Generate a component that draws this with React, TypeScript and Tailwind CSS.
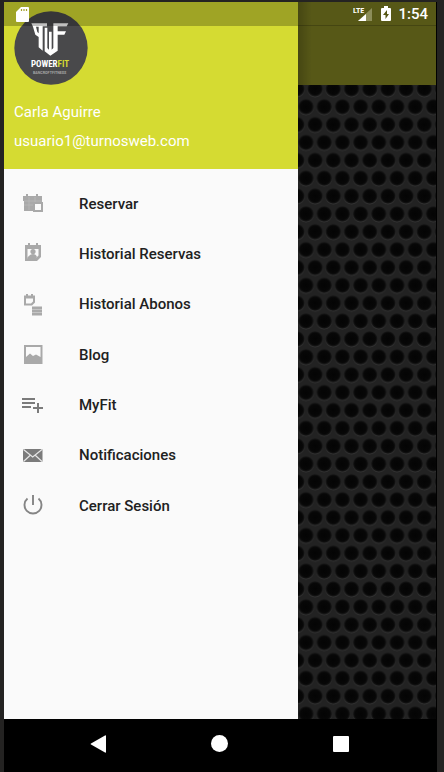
import type { ReactNode } from "react";

function Logo() {
  return (
    <svg viewBox="0 0 222 222" className="size-[74px]" role="img" aria-label="PowerFit">
      <circle cx="111" cy="111" r="110" fill="#49494b" />
      <g fill="#fff">
        <path fillRule="evenodd" d="M52 37H99V46H86V119L74 109V78L64 71L57 47ZM66 47L70 63L74 67V47Z" />
        <path d="M92 50H100V111L105 116V62H113V116L118 111V37H163L158 46H131V61H156L151 71H131V119L109 134L92 121Z" />
      </g>
      <text
        x="108"
        y="167"
        fill="#fff"
        fontFamily="'Roboto Condensed', 'Liberation Sans Narrow', Roboto, sans-serif"
        fontWeight="700"
        fontSize="27"
        textAnchor="middle"
      >
        POWER<tspan fill="#d5db32">FIT</tspan>
      </text>
      <text x="107" y="189" fill="#a5a5a5" fontFamily="Roboto, sans-serif" fontWeight="700" fontSize="11" textAnchor="middle">
        BANCROFTFITNESS
      </text>
    </svg>
  );
}

function ReservarIcon() {
  return (
    <svg viewBox="0 0 22 22" className="size-[22px]" fill="#a9a9a9">
      <path d="M1 3H4V1H6V3H14V1H16V3H20V18H2V8H1Z" />
      <path d="M2 8H20M7 4V17M13 4V10M2 12H12" stroke="#bababa" strokeWidth=".7" />
      <path d="M11 9H21V19H11Z" />
      <path d="M13 11H19V17H13Z" fill="#fafafa" />
    </svg>
  );
}

function HistorialReservasIcon() {
  return (
    <svg viewBox="0 0 22 22" className="size-[22px]" fill="#a9a9a9">
      <path fillRule="evenodd" d="M3 2H6V0H8V2H14V0H16V2H19V14L15 18H3ZM5.500 6V15.500H13.500L16.500 12.500V6Z" />
      <circle cx="11" cy="8.500" r="2.600" />
      <path d="M5.500 16V14.500Q8 11 11 11Q14 11 15 14L13 17Z" />
    </svg>
  );
}

function HistorialAbonosIcon() {
  return (
    <svg viewBox="0 0 22 22" className="size-[22px]" fill="#a9a9a9">
      <path fillRule="evenodd" d="M2 1.500H4V0H6V1.500H9V0H11V1.500H13V8.500L10 11.500H2ZM4 4.500V9.500H9L11 7.500V4.500Z" />
      <path d="M10 12.500H20V21.500H10Z" />
      <path d="M10 15.500H20M10 18.500H20" stroke="#cdcdcd" strokeWidth=".8" />
    </svg>
  );
}

function BlogIcon() {
  return (
    <svg viewBox="0 0 22 22" className="size-[22px]" fill="#a9a9a9">
      <path fillRule="evenodd" d="M2 1H20.500V20H2ZM4 3V13L8 9.500L11 12L14 10.500L18.500 13V3Z" />
    </svg>
  );
}

function MyFitIcon() {
  return (
    <svg viewBox="0 0 22 22" className="size-[22px]" fill="none" stroke="#7b7b7b" strokeWidth="2">
      <path d="M0 5H13M0 9H13M0 13H9M16 9V19M11 14H21" />
    </svg>
  );
}

function MailIcon() {
  return (
    <svg viewBox="0 0 22 22" className="size-[22px]">
      <rect x="1" y="4" width="19.500" height="13" rx="1" fill="#7b7b7b" />
      <path d="M1.500 4.500L10.700 12L20 4.500M1.500 16.500L8 10.500M20 16.500L13.500 10.500" fill="none" stroke="#e6e6e6" strokeWidth="1.200" />
    </svg>
  );
}

function PowerIcon() {
  return (
    <svg viewBox="0 0 22 22" className="size-[22px]" fill="none" stroke="#858585" strokeWidth="1.900">
      <path d="M11 0V10M5.500 3.500A8.500 8.500 0 1 0 16.500 3.500" />
    </svg>
  );
}

const items: { label: string; icon: ReactNode }[] = [
  { label: "Reservar", icon: <ReservarIcon /> },
  { label: "Historial Reservas", icon: <HistorialReservasIcon /> },
  { label: "Historial Abonos", icon: <HistorialAbonosIcon /> },
  { label: "Blog", icon: <BlogIcon /> },
  { label: "MyFit", icon: <MyFitIcon /> },
  { label: "Notificaciones", icon: <MailIcon /> },
  { label: "Cerrar Sesión", icon: <PowerIcon /> },
];

function StatusBar() {
  return (
    <div className="absolute inset-x-0 top-0 flex h-6 text-white">
      <div className="flex w-[68%] items-center bg-black/25 pl-3">
        <svg viewBox="0 0 13 15" className="h-[15px] w-[13px]">
          <path d="M5 0H12Q13 0 13 1V14Q13 15 12 15H1Q0 15 0 14V5Z" fill="#fff" />
          <path d="M5.500 2V4M8 2V4M10.500 2V4" stroke="#a3a02a" strokeWidth="1.200" />
        </svg>
      </div>
      <div className="flex flex-1 items-center justify-end border-b border-black/20 pr-2">
        <svg viewBox="0 0 20 16" className="mr-2 h-4 w-5">
          <path d="M19 2V15H5Z" fill="#8c8d59" />
          <path d="M13 8V15H5Z" fill="#fff" />
          <text x="0" y="7" fill="#fff" fontFamily="'Roboto Condensed', 'Liberation Sans Narrow', Roboto, sans-serif" fontWeight="700" fontSize="8">
            LTE
          </text>
        </svg>
        <svg viewBox="0 0 10 15" className="mr-[7px] h-[15px] w-[10px]">
          <path d="M3 0H7V2H9Q10 2 10 3V14Q10 15 9 15H1Q0 15 0 14V3Q0 2 1 2H3Z" fill="#fff" />
          <path d="M6 4L2 9H4.500V13L8 8H6Z" fill="#565716" />
        </svg>
        <span className="text-[15px] leading-6 font-medium">1:54</span>
      </div>
    </div>
  );
}

function Mesh() {
  return (
    <svg className="w-full flex-1" aria-hidden="true">
      <defs>
        <radialGradient id="hole">
          <stop offset="0" stopColor="#040404" />
          <stop offset=".7" stopColor="#070707" />
          <stop offset=".86" stopColor="#131313" />
          <stop offset="1" stopColor="#232323" stopOpacity="0" />
        </radialGradient>
        <linearGradient id="rim" x1="0" y1="0" x2="0" y2="1">
          <stop offset=".5" stopColor="#363636" stopOpacity="0" />
          <stop offset="1" stopColor="#363636" />
        </linearGradient>
        <pattern id="mesh" width="18.200" height="35.720" patternUnits="userSpaceOnUse" x="8" y="-5">
          <rect width="18.200" height="35.720" fill="#222" />
          <g fill="none" stroke="url(#rim)">
            <circle cx="9.100" cy="9" r="7.800" />
            <circle cx="0" cy="26.860" r="7.800" />
            <circle cx="18.200" cy="26.860" r="7.800" />
          </g>
          <g fill="url(#hole)">
            <circle cx="9.100" cy="8.800" r="8.200" />
            <circle cx="0" cy="26.660" r="8.200" />
            <circle cx="18.200" cy="26.660" r="8.200" />
          </g>
        </pattern>
      </defs>
      <rect width="100%" height="100%" fill="url(#mesh)" />
    </svg>
  );
}

export default function App() {
  return (
    <div className="flex min-h-screen flex-col bg-[#242322] pt-[2px] pr-[7px] pl-1 font-[Roboto,sans-serif]">
      <div className="relative flex flex-1 border-r border-black">
        <aside className="flex w-[68%] flex-col bg-[#fafafa]">
          <header className="flex h-[167px] flex-col bg-[#d5db32] px-[10px] pt-[9px] text-[15px] text-white">
            <Logo />
            <p className="mt-[13px] leading-[29px]">Carla Aguirre</p>
            <p className="leading-[29px]">usuario1@turnosweb.com</p>
          </header>
          <nav className="pt-[10px]">
            <ul className="grid h-[352px] auto-rows-fr">
              {items.map((item) => (
                <li key={item.label} className="flex">
                  <a href="#" className="flex flex-1 items-center gap-[35px] pl-[18px] text-[15px] font-medium text-[#212121]">
                    {item.icon}
                    {item.label}
                  </a>
                </li>
              ))}
            </ul>
          </nav>
        </aside>
        <main className="flex flex-1 flex-col bg-[#1e1e1e]">
          <div className="h-[83px] bg-[#575817] bg-linear-to-r from-black/20 to-transparent to-10%" />
          <Mesh />
        </main>
        <StatusBar />
      </div>
      <footer className="grid h-[53px] grid-cols-3 items-center justify-items-center bg-black pr-9 pb-1 pl-[34px]">
        <button type="button" aria-label="Atrás">
          <svg viewBox="0 0 17 18" className="h-[18px] w-[17px]" fill="#fff">
            <path d="M15 .500Q16 0 16 1V17Q16 18 15 17.500L1 9.500Q0 9 1 8.500Z" />
          </svg>
        </button>
        <button type="button" aria-label="Inicio" className="size-[17px] rounded-full bg-white" />
        <button type="button" aria-label="Recientes" className="size-4 rounded-[1px] bg-white" />
      </footer>
    </div>
  );
}
